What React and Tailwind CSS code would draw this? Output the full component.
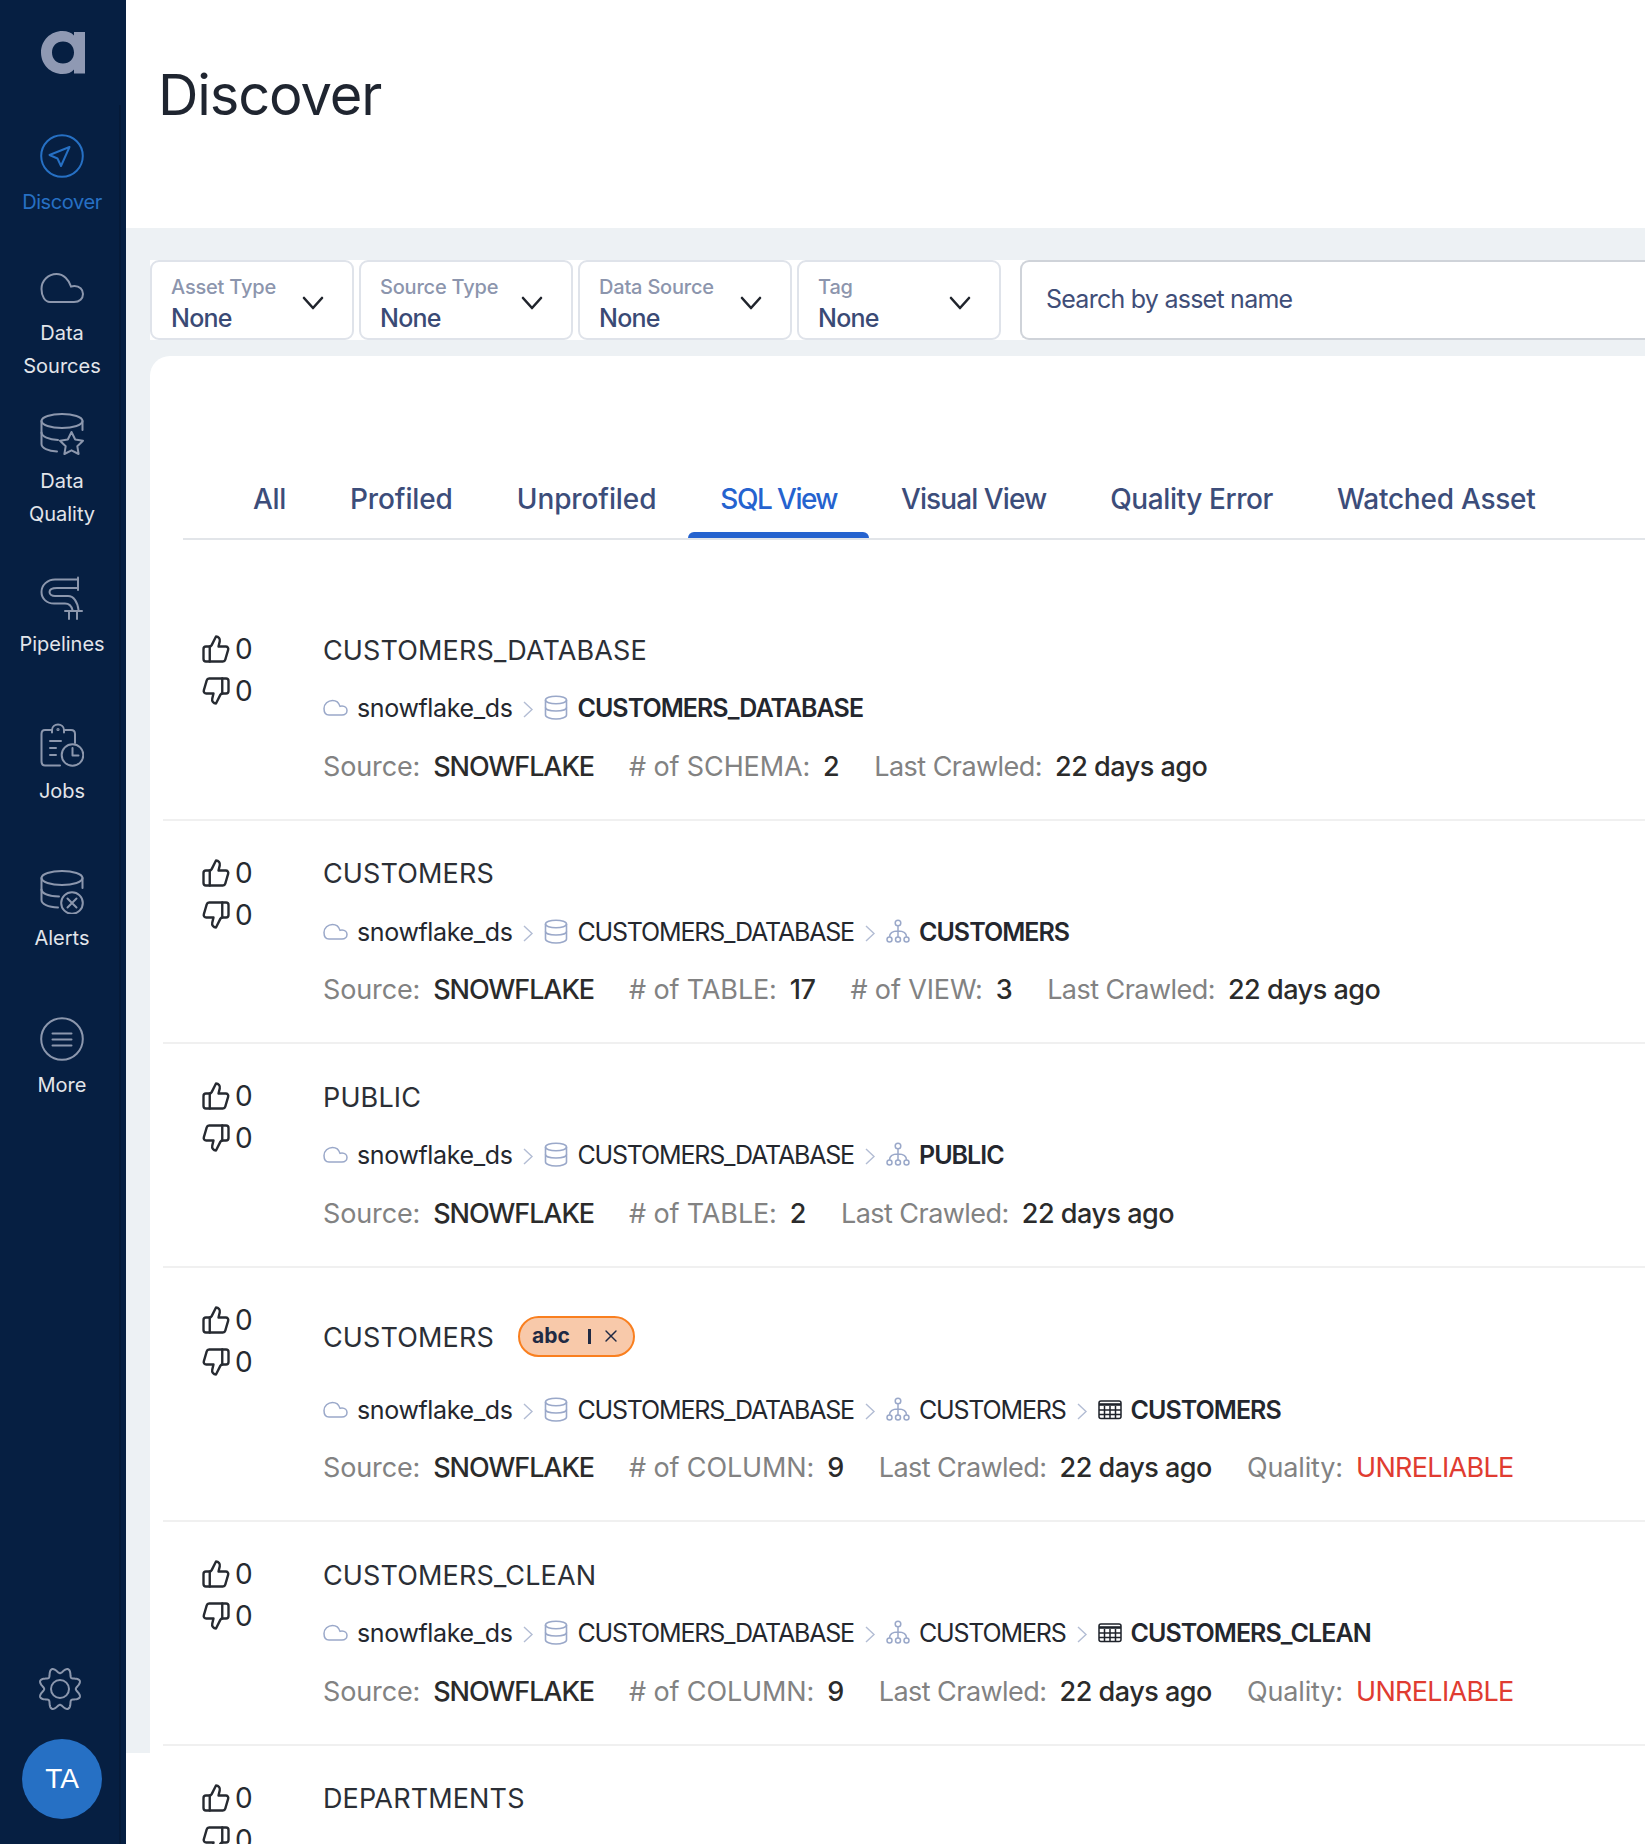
import { ThumbsUp, ThumbsDown, X } from "lucide-react";

const gearPath = () => {
  const pts = [];
  for (let i = 0; i < 240; i++) {
    const t = (i / 240) * Math.PI * 2;
    const r = 18.6 - 2.8 * Math.cos(8 * t);
    pts.push(`${(22 + r * Math.cos(t)).toFixed(2)} ${(22 + r * Math.sin(t)).toFixed(2)}`);
  }
  return `M${pts.join("L")}Z`;
};

function Ic({ children, className = "", box = "0 0 44 44", size = 44, width = 2 }) {
  return (
    <svg width={size} height={size} viewBox={box} fill="none" stroke="currentColor" strokeWidth={width} strokeLinecap="round" strokeLinejoin="round" className={className}>
      {children}
    </svg>
  );
}

const navIcons = {
  discover: (
    <Ic>
      <circle cx="22" cy="22" r="20.8" />
      <path d="M29.5 13 L9.5 21 L17.5 24.5 L21 32 Z" />
    </Ic>
  ),
  sources: (
    <Ic>
      <path d="M10 37H34C39.5 37 43 33.5 43 29C43 24.5 39.5 21 34.5 21C33.2 21 32 21.2 31 21.6C29 14.5 23.5 9 16.5 9C8.5 9 1.5 15.5 1.5 24C1.5 31.5 5 37 10 37Z" />
    </Ic>
  ),
  quality: (
    <Ic>
      <ellipse cx="22" cy="8" rx="20.5" ry="7" />
      <path d="M1.5 8V31C1.5 35 8 38 17 38.5" />
      <path d="M1.5 19.5C1.5 23.5 9 26.5 18 27" />
      <path d="M42.5 8V17" />
      <path d="M31.5 19L35.2 26.5L43 27.7L37.3 33.2L38.6 41L31.5 37.3L24.4 41L25.7 33.2L20 27.7L27.8 26.5Z" />
    </Ic>
  ),
  pipelines: (
    <Ic>
      <path d="M38 1.5V14" />
      <path d="M38 3.5H15C7.5 3.5 1.5 9 1.5 16C1.5 23 7 27.5 14 27.5H25C29 27.5 31.5 30 32.5 34" />
      <path d="M38 12H17C12 12 9.5 13.8 9.5 16C9.5 18.5 12 20 15 20H28C33.5 20 37.5 25.5 38.5 34" />
      <path d="M25 35H42" />
      <path d="M29 35V43" />
      <path d="M37 35V43" />
    </Ic>
  ),
  jobs: (
    <Ic>
      <path d="M12 7H5C2.5 7 1.5 8.5 1.5 11V38C1.5 41 2.5 42.5 5 42.5H20" />
      <path d="M24 7H31C33.5 7 35 8.5 35 11V20" />
      <path d="M12 9.5V7C12 3.5 15 1.5 18 1.5C21 1.5 24 3.5 24 7V9.5" />
      <circle cx="18" cy="6.5" r="0.6" />
      <path d="M10 18H21M10 25H16M10 32H16" />
      <circle cx="32.5" cy="32" r="10.8" />
      <path d="M32.5 25V32.5H38.5" />
    </Ic>
  ),
  alerts: (
    <Ic>
      <ellipse cx="22" cy="8" rx="20.5" ry="7" />
      <path d="M1.5 8V30C1.5 34 8 37 18 37.5" />
      <path d="M1.5 19.5C1.5 23.5 9 26 19 26.5" />
      <path d="M42.5 8V18" />
      <circle cx="32" cy="33" r="10.8" />
      <path d="M27.5 28.5L36.5 37.5M36.5 28.5L27.5 37.5" />
    </Ic>
  ),
  more: (
    <Ic>
      <circle cx="22" cy="22" r="20.8" />
      <path d="M12.5 16.5H31.5M12.5 22.5H31.5M12.5 28.5H31.5" />
    </Ic>
  ),
};

const navItems = [
  { key: "discover", lines: ["Discover"], mt: "mt-[29px]", active: true },
  { key: "sources", lines: ["Data", "Sources"], mt: "mt-[46px]" },
  { key: "quality", lines: ["Data", "Quality"], mt: "mt-[30px]" },
  { key: "pipelines", lines: ["Pipelines"], mt: "mt-[45px]" },
  { key: "jobs", lines: ["Jobs"], mt: "mt-[62px]" },
  { key: "alerts", lines: ["Alerts"], mt: "mt-[62px]" },
  { key: "more", lines: ["More"], mt: "mt-[62px]" },
];

function Sidebar() {
  return (
    <aside className="flex w-[126px] shrink-0 flex-col bg-[#061f42]">
      <div className="flex h-[105px] items-start justify-center pt-[31px] pr-[1px]">
        <svg width="44" height="43" viewBox="0 0 44 43">
          <path
            fillRule="evenodd"
            fill="#8f99b3"
            d="M21.5 0C26.5 0 30.5 1.5 33 4.5V1H44V42.5H33V38.5C30.5 41.5 26.5 43 21.5 43C9.5 43 0 33.5 0 21.5C0 9.5 9.5 0 21.5 0ZM22 10.5C15.5 10.5 11 15 11 21.5C11 28 15.5 32.5 22 32.5C28.5 32.5 33 28 33 21.5C33 15 28.5 10.5 22 10.5Z"
          />
        </svg>
      </div>
      <nav className="flex w-[121px] flex-1 flex-col items-center border-r-2 border-[#051a38] pl-[5px]">
        {navItems.map((item) => (
          <div key={item.key} className={`flex flex-col items-center ${item.mt}`}>
            <div className={item.active ? "text-[#2670c4]" : "text-[#8c97ad]"}>{navIcons[item.key]}</div>
            <div className={`mt-[8px] text-center text-[20px] leading-[33px] ${item.active ? "tracking-[-0.02em] text-[#2670c4]" : "text-[#e2e5ea]"}`}>
              {item.lines.map((l) => (
                <div key={l}>{l}</div>
              ))}
            </div>
          </div>
        ))}
        <div className="mt-auto mr-[4px] text-[#8c97ad]">
          <Ic>
            <path d={gearPath()} />
            <circle cx="22" cy="22" r="9" />
          </Ic>
        </div>
        <div className="mt-[28px] mb-[25px] flex h-[80px] w-[80px] items-center justify-center rounded-full bg-[#2670c4] font-['Liberation_Sans',sans-serif] text-[28px] text-white">
          TA
        </div>
      </nav>
    </aside>
  );
}

function Chevron() {
  return (
    <svg width="22" height="14" viewBox="0 0 22 14" fill="none" stroke="#20242c" strokeWidth="2.6" strokeLinecap="round" strokeLinejoin="round" className="mt-[5px]">
      <path d="M2 2L11 12L20 2" />
    </svg>
  );
}

const filters = [
  { label: "Asset Type", w: "w-[204px]" },
  { label: "Source Type", w: "w-[214px]" },
  { label: "Data Source", w: "w-[214px]" },
  { label: "Tag", w: "w-[204px]" },
];

function Filters() {
  return (
    <div className="flex h-[80px] items-stretch bg-white">
      <div className="flex gap-[5px]">
        {filters.map((f) => (
          <div key={f.label} className={`flex items-center justify-between rounded-[9px] border-2 border-[#dfe3ea] pl-[19px] pr-[28px] ${f.w}`}>
            <div className="pt-[6px]">
              <div className="text-[20px] leading-[30px] font-medium tracking-[-0.01em] text-[#8c95ad]">{f.label}</div>
              <div className="text-[25px] leading-[32px] font-medium tracking-[-0.03em] text-[#3a4a75]">None</div>
            </div>
            <Chevron />
          </div>
        ))}
      </div>
      <div className="ml-[19px] flex w-[800px] items-center rounded-l-[9px] border-y-2 border-l-2 border-[#cfd3d9] pl-[24px] text-[25px] tracking-[-0.03em] text-[#3f4e78]">
        Search by asset name
      </div>
    </div>
  );
}

const tabs = [
  { name: "All", cls: "tracking-[-0.012em]" },
  { name: "Profiled", cls: "tracking-[-0.004em]" },
  { name: "Unprofiled", cls: "tracking-[-0.004em]" },
  { name: "SQL View", cls: "tracking-[-0.055em]" },
  { name: "Visual View", cls: "tracking-[-0.033em]" },
  { name: "Quality Error", cls: "tracking-[-0.015em]" },
  { name: "Watched Asset", cls: "tracking-[-0.009em]" },
];

function Tabs() {
  return (
    <div className="ml-[33px] flex border-b-2 border-[#e2e5e9] pl-[38px]">
      {tabs.map((t) => (
        <div key={t.name} className={`relative flex h-[79px] items-center px-[32px] text-[28px] font-medium ${t.cls} ${t.name === "SQL View" ? "text-[#2563cf]" : "text-[#3c4d7a]"}`}>
          {t.name}
          {t.name === "SQL View" && <span className="absolute inset-x-0 bottom-0 h-[6px] rounded-t-[6px] bg-[#2563cf]" />}
        </div>
      ))}
    </div>
  );
}

function CloudIc() {
  return (
    <svg width="25" height="25" viewBox="0 0 25 25" fill="none" stroke="#9aa8c9" strokeWidth="1.5" strokeLinejoin="round">
      <path d="M6 20H19C22 20 24 18 24 15.5C24 13 22 11 19 11C18.3 11 17.7 11.1 17 11.4C16 8 13.5 5.5 9.5 5.5C5 5.5 1 9 1 13.5C1 17.5 3 20 6 20Z" />
    </svg>
  );
}

function DbIc() {
  return (
    <svg width="24" height="25" viewBox="0 0 24 25" fill="none" stroke="#9aa8c9" strokeWidth="1.6">
      <ellipse cx="12" cy="5" rx="10.5" ry="3.8" />
      <path d="M1.5 5V20C1.5 22 6 24 12 24C18 24 22.5 22 22.5 20V5" />
      <path d="M1.5 12.5C1.5 14.5 6 16 12 16C18 16 22.5 14.5 22.5 12.5" />
    </svg>
  );
}

function SchemaIc() {
  return (
    <svg width="24" height="25" viewBox="0 0 24 25" fill="none" stroke="#9aa8c9" strokeWidth="1.5">
      <circle cx="12" cy="4" r="2.8" />
      <circle cx="3.5" cy="20.5" r="2.5" />
      <circle cx="12" cy="20.5" r="2.5" />
      <circle cx="20.5" cy="20.5" r="2.5" />
      <path d="M12 7V18M12 12C7 12 3.5 14 3.5 18M12 12C17 12 20.5 14 20.5 18" />
    </svg>
  );
}

function TableIc() {
  return (
    <svg width="24" height="25" viewBox="0 0 24 25" fill="none" stroke="#1f232b" strokeWidth="1.5">
      <rect x="1" y="4" width="22" height="17.5" rx="2" />
      <path d="M1 7.5H23" strokeWidth="2.6" />
      <path d="M1 13H23M1 17.5H23M6.5 9V21.5M12 9V21.5M17.5 9V21.5" />
    </svg>
  );
}

function Sep() {
  return (
    <svg width="12" height="22" viewBox="0 0 12 22" fill="none" stroke="#b3bdd4" strokeWidth="1.4" className="mx-[10px]">
      <path d="M2 4L10 11.5L2 19" />
    </svg>
  );
}

const crumbIcons = { cloud: CloudIc, db: DbIc, schema: SchemaIc, table: TableIc };

function Crumbs({ path }) {
  return (
    <div className="flex h-[40px] items-center text-[25px] text-[#24272e]">
      {path.map((c, i) => {
        const Icon = crumbIcons[c.icon];
        const last = i === path.length - 1;
        let cls = "tracking-[-0.047em]";
        if (c.icon === "cloud") cls = "tracking-[-0.015em]";
        else if (last) cls = "font-semibold tracking-[-0.038em]";
        return (
          <div key={i} className="flex items-center">
            {i > 0 && <Sep />}
            <span className="mb-[3px]">
              <Icon />
            </span>
            <span className={`ml-[9px] ${cls}`}>{c.text}</span>
          </div>
        );
      })}
    </div>
  );
}

function Meta({ items }) {
  return (
    <div className="flex h-[40px] items-center gap-[35px] text-[27px]">
      {items.map(([label, value, red]) => {
        let cls = "font-medium tracking-[-0.018em] text-[#2b2b2b]";
        if (red) cls = "tracking-[-0.025em] text-[#e03c31]";
        else if (value === "SNOWFLAKE") cls = "font-medium tracking-[-0.04em] text-[#2b2b2b]";
        return (
          <div key={label} className="flex items-center gap-[13px]">
            <span className={`text-[#828282] ${label === "Last Crawled:" ? "tracking-[-0.02em]" : "tracking-[-0.005em]"}`}>{label}</span>
            <span className={cls}>{value}</span>
          </div>
        );
      })}
    </div>
  );
}

function Votes() {
  return (
    <div className="w-[160px] shrink-0 pl-[38px] text-[28px] text-[#262a31]">
      <div className="flex h-[42px] items-center gap-[4px]">
        <ThumbsUp size={30} strokeWidth={1.9} />0
      </div>
      <div className="flex h-[42px] items-center gap-[4px]">
        <ThumbsDown size={30} strokeWidth={1.9} />0
      </div>
    </div>
  );
}

const cloud = { icon: "cloud", text: "snowflake_ds" };
const db = { icon: "db", text: "CUSTOMERS_DATABASE" };
const schema = (text) => ({ icon: "schema", text });
const table = (text) => ({ icon: "table", text });
const crawled = ["Last Crawled:", "22 days ago"];
const source = ["Source:", "SNOWFLAKE"];
const unreliable = ["Quality:", "UNRELIABLE", true];

const rows = [
  {
    title: "CUSTOMERS_DATABASE",
    path: [cloud, db],
    meta: [source, ["# of SCHEMA:", "2"], crawled],
  },
  {
    title: "CUSTOMERS",
    path: [cloud, db, schema("CUSTOMERS")],
    meta: [source, ["# of TABLE:", "17"], ["# of VIEW:", "3"], crawled],
  },
  {
    title: "PUBLIC",
    path: [cloud, db, schema("PUBLIC")],
    meta: [source, ["# of TABLE:", "2"], crawled],
  },
  {
    title: "CUSTOMERS",
    tag: "abc",
    path: [cloud, db, schema("CUSTOMERS"), table("CUSTOMERS")],
    meta: [source, ["# of COLUMN:", "9"], crawled, unreliable],
  },
  {
    title: "CUSTOMERS_CLEAN",
    path: [cloud, db, schema("CUSTOMERS"), table("CUSTOMERS_CLEAN")],
    meta: [source, ["# of COLUMN:", "9"], crawled, unreliable],
  },
  { title: "DEPARTMENTS" },
];

function Row({ row }) {
  return (
    <div className="flex border-b-2 border-[#f0f0f0] pt-[31px] pb-[31.5px]">
      <Votes />
      <div className="min-w-0 flex-1 pt-[3px]">
        {row.tag ? (
          <div className="mb-[15px] flex h-[74px] items-center gap-[24px] text-[27px] tracking-[0.005em] text-[#2b2f36]">
            {row.title}
            <div className="mb-[5px] flex h-[41px] w-[117px] items-center rounded-full border-2 border-[#f97f1f] bg-[#f8c9aa] pl-[12px] text-[21px] font-bold tracking-normal text-[#1f2a44]">
              {row.tag}
              <span className="ml-[18px] h-[15px] w-[3px] bg-[#1f2a44]" />
              <X size={20} strokeWidth={1.7} className="ml-[10px]" />
            </div>
          </div>
        ) : (
          <div className="mb-[18px] flex h-[40px] items-center text-[27px] tracking-[0.005em] text-[#2b2f36]">{row.title}</div>
        )}
        {row.path && <Crumbs path={row.path} />}
        {row.meta && (
          <div className="mt-[18px]">
            <Meta items={row.meta} />
          </div>
        )}
      </div>
    </div>
  );
}

export default function App() {
  return (
    <div className="flex h-[1844px] overflow-hidden bg-white font-['Inter',sans-serif]">
      <Sidebar />
      <main className="min-w-0 flex-1">
        <header className="h-[228px] bg-white pl-[32px] pt-[57px] text-[56px] leading-[76px] tracking-[-0.02em] text-[#1f2530]">Discover</header>
        <section className="h-[1525px] bg-[#edf1f4] pl-[24px] pt-[32px]">
          <Filters />
          <div className="mt-[16px] rounded-tl-[20px] bg-white pt-[103px]">
            <Tabs />
            <div className="ml-[13px] mt-[57px]">
              {rows.map((row, i) => (
                <Row key={i} row={row} />
              ))}
            </div>
          </div>
        </section>
      </main>
    </div>
  );
}
